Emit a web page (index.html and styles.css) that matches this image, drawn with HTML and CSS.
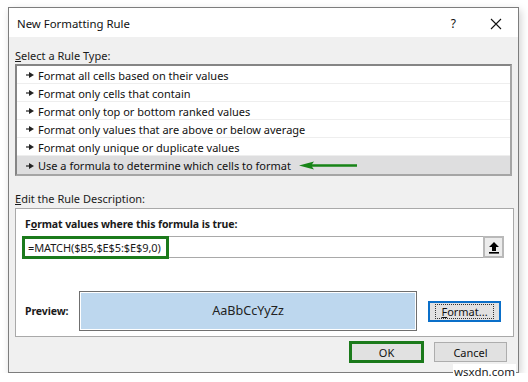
FILE: index.html
```html
<!DOCTYPE html>
<html lang="en">

<head>
  <meta charset="UTF-8">
  <title>New Formatting Rule</title>
  <link rel="stylesheet" href="styles.css">
</head>

<body>
  <div class="dialog">
    <div class="titlebar">
      <span class="title">New Formatting Rule</span>
      <span class="help">?</span>
      <svg class="close" width="12" height="12" viewBox="0 0 12 12">
        <path d="M1 1 L11 11 M11 1 L1 11" stroke="#111" stroke-width="1.1" fill="none" />
      </svg>
    </div>

    <div class="content">
      <div class="label first"><u>S</u>elect a Rule Type:</div>
      <div class="rule-list">
        <div class="rule"><svg class="mark" width="8" height="6" viewBox="0 0 8 6"><path d="M0 3 H4" stroke="#222" stroke-width="1.2"/><path d="M3 0 L8 3 L3 6 Z" fill="#222"/></svg>Format all cells based on their values</div>
        <div class="rule"><svg class="mark" width="8" height="6" viewBox="0 0 8 6"><path d="M0 3 H4" stroke="#222" stroke-width="1.2"/><path d="M3 0 L8 3 L3 6 Z" fill="#222"/></svg>Format only cells that contain</div>
        <div class="rule"><svg class="mark" width="8" height="6" viewBox="0 0 8 6"><path d="M0 3 H4" stroke="#222" stroke-width="1.2"/><path d="M3 0 L8 3 L3 6 Z" fill="#222"/></svg>Format only top or bottom ranked values</div>
        <div class="rule"><svg class="mark" width="8" height="6" viewBox="0 0 8 6"><path d="M0 3 H4" stroke="#222" stroke-width="1.2"/><path d="M3 0 L8 3 L3 6 Z" fill="#222"/></svg>Format only values that are above or below average</div>
        <div class="rule"><svg class="mark" width="8" height="6" viewBox="0 0 8 6"><path d="M0 3 H4" stroke="#222" stroke-width="1.2"/><path d="M3 0 L8 3 L3 6 Z" fill="#222"/></svg>Format only unique or duplicate values</div>
        <div class="rule selected"><svg class="mark" width="8" height="6" viewBox="0 0 8 6"><path d="M0 3 H4" stroke="#222" stroke-width="1.2"/><path d="M3 0 L8 3 L3 6 Z" fill="#222"/></svg>Use a formula to determine which cells to format
          <svg class="pointer" width="58" height="9" viewBox="0 0 58 9">
            <path d="M0 4.5 L15 0.5 L13 3.2 H58 V5.8 H13 L15 8.5 Z" fill="#178417" />
          </svg>
        </div>
      </div>

      <div class="label second"><u>E</u>dit the Rule Description:</div>
      <div class="group">
        <div class="label bold">F<u>o</u>rmat values where this formula is true:</div>
        <div class="formula-row">
          <div class="formula">
            <span class="formula-text">=MATCH($B5,$E$5:$E$9,0)</span>
          </div>
          <div class="collapse">
            <svg width="12" height="13" viewBox="0 0 12 13">
              <path d="M6 1 L11 6 H8 V10 H4 V6 H1 Z" fill="#000" />
              <rect x="1" y="11" width="10" height="1.6" fill="#000" />
            </svg>
          </div>
        </div>
        <div class="preview-row">
          <div class="label bold preview-label">Preview:</div>
          <div class="preview">
            <div class="sample">AaBbCcYyZz</div>
          </div>
          <div class="button format"><span class="focus"><u>F</u>ormat...</span></div>
        </div>
      </div>

      <div class="buttons">
        <div class="button ok">OK</div>
        <div class="button cancel">Cancel</div>
      </div>
    </div>
    <span class="grip"></span>
  </div>
  <div class="watermark">wsxdn.com</div>
</body>

</html>
```

FILE: styles.css
```css
body {
  margin: 0;
  background: #ffffff;
  font-family: "Noto Sans", "Open Sans", sans-serif;
  font-size: 11px;
  color: #1a1a1a;
}

.dialog {
  position: relative;
  width: 509px;
  height: 364px;
  margin: 7px 0 0 8px;
  background: #f0f0f0;
  border: 1px solid #7d7d7d;
  box-shadow: 2px 3px 8px rgba(0, 0, 0, 0.18);
}

.titlebar {
  display: flex;
  align-items: center;
  height: 27px;
  padding: 2px 0 0 8px;
  background: #ffffff;
}

.title {
  flex: 1;
  font-size: 11.4px;
  color: #111;
}

.help {
  font-size: 12px;
  margin-right: 34px;
  color: #111;
}

.close {
  margin-right: 16px;
}

.content {
  padding: 0 6px;
}

.label {
  height: 16px;
  line-height: 16px;
}

.label.first {
  margin-top: 11px;
}

.label.second {
  margin-top: 15px;
  margin-bottom: 1px;
}

.bold {
  font-weight: bold;
  font-size: 10.5px;
  letter-spacing: -0.1px;
}

.rule-list {
  width: 493px;
  background: #ffffff;
  border: 2px solid #858585;
  border-right-color: #a5a5a5;
  border-bottom-color: #a5a5a5;
}

.rule {
  position: relative;
  display: flex;
  align-items: center;
  height: 16px;
  padding: 1px 0 0 9px;
  border-bottom: 1px solid #eeeeee;
  color: #111;
}

.rule:last-child {
  border-bottom: none;
  height: 17px;
}

.rule.selected {
  background: #dededf;
}

.mark {
  margin-right: 4px;
}

.pointer {
  margin-left: 8px;
}

.group {
  width: 482px;
  padding: 7px 9px 5px 6px;
  background: #ffffff;
  border: 1px solid #a9a9a9;
}

.group .label.bold {
  margin-left: 3px;
}

.formula-row {
  display: flex;
  margin-top: 4px;
}

.formula {
  display: flex;
  align-items: center;
  flex: 1;
  height: 20px;
  border: 1px solid #a9a9a9;
  border-right: none;
}

.formula-text {
  display: block;
  height: 17px;
  line-height: 17px;
  margin-left: -1px;
  padding: 0 5px 0 3px;
  border: 3px solid #1b7a1b;
  letter-spacing: -0.1px;
}

.collapse {
  display: flex;
  align-items: center;
  justify-content: center;
  width: 17px;
  height: 18px;
  background: #ececec;
  border: 2px solid #b9b9b9;
}

.preview-row {
  display: flex;
  align-items: center;
  margin-top: 33px;
}

.group .preview-label {
  width: 54px;
  height: 40px;
  line-height: 40px;
}

.preview {
  width: 334px;
  height: 36px;
  padding: 1px;
  background: #ffffff;
  border: 1px solid #6f6f6f;
}

.sample {
  height: 36px;
  line-height: 36px;
  text-align: center;
  font-size: 12.6px;
  color: #222;
  background: #bdd7ee;
}

.button {
  display: flex;
  align-items: center;
  justify-content: center;
  background: #e1e1e1;
  color: #111;
}

.format {
  width: 69px;
  height: 17px;
  margin-left: 11px;
  border: 2px solid #0a6fc9;
}

.focus {
  padding: 0 5px;
  border: 1px dotted #333;
  line-height: 13px;
}

.buttons {
  display: flex;
  justify-content: flex-end;
  align-items: flex-start;
  margin-top: 4px;
  padding-right: 5px;
}

.ok {
  width: 69px;
  height: 16px;
  border: 3px solid #1b7a1b;
}

.cancel {
  width: 71px;
  height: 18px;
  margin-top: 1px;
  margin-left: 10px;
  border: 1px solid #adadad;
}

.grip {
  position: absolute;
  right: 2px;
  bottom: 2px;
  width: 6px;
  height: 6px;
  background: radial-gradient(circle, #a0a0a0 0.8px, transparent 1px) 0 0 / 3px 3px;
}

.watermark {
  position: absolute;
  left: 453px;
  top: 364px;
  padding: 0 1px;
  background: #ffffff;
  font-size: 11.5px;
  color: #222;
}
```
